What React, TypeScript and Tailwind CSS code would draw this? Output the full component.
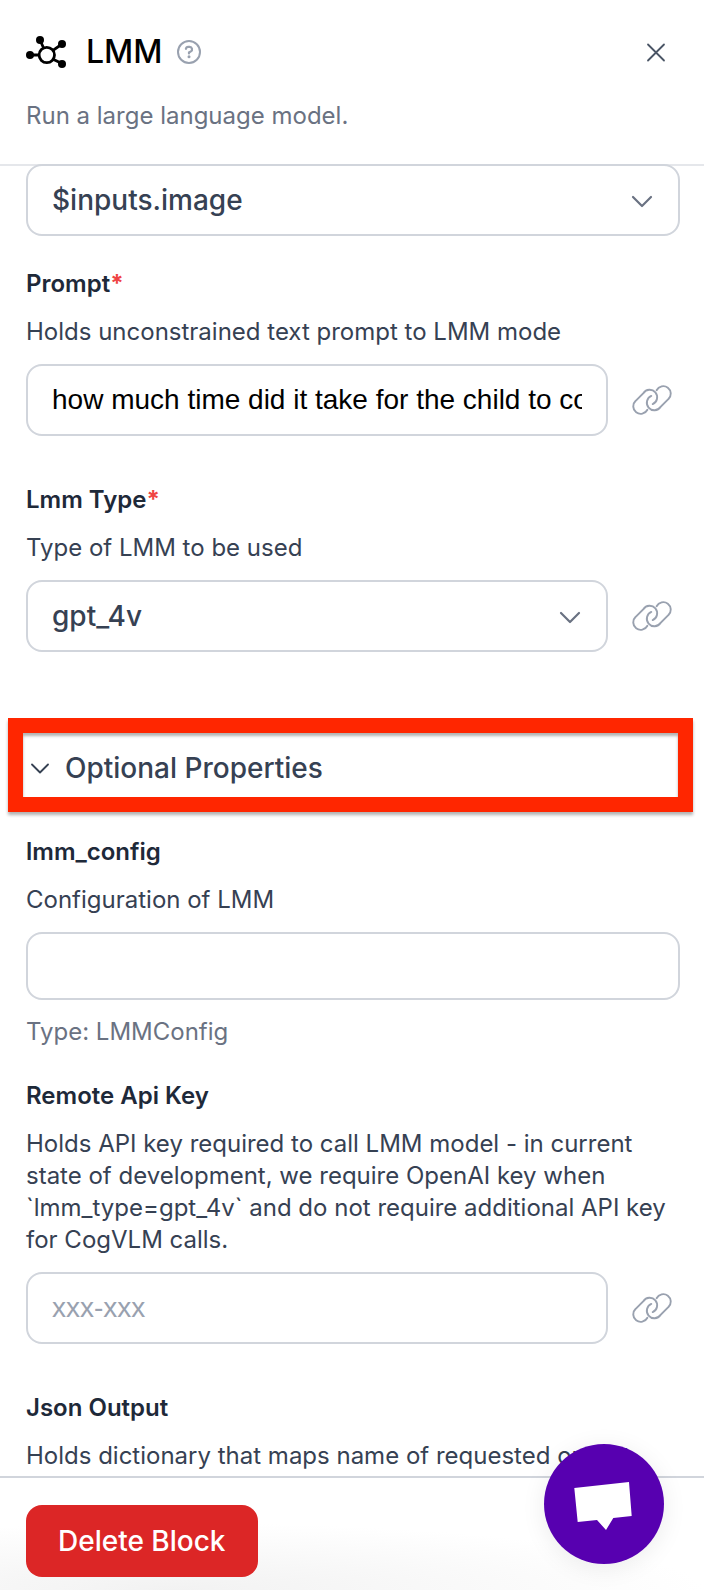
import { ReactNode, useState } from "react";

interface FieldProps {
  id: string;
  label: string;
  description: string;
  required?: boolean;
  children: ReactNode;
}

interface SelectProps {
  id: string;
  label?: string;
  options: string[];
}

const controlClass =
  "w-full min-w-0 rounded-2xl border-2 border-gray-300 bg-white px-6 text-[28px] outline-none focus:border-gray-400";

const inputClass = `${controlClass} font-['Liberation_Sans',sans-serif] text-black placeholder:text-gray-400`;

function ModelIcon() {
  return (
    <svg className="size-10 shrink-0" viewBox="0 0 40 40" aria-hidden="true">
      <g fill="none" stroke="currentColor" strokeWidth="2.8">
        <circle cx="20.8" cy="23" r="7.7" />
        <path d="M14 8l3.6 8M36 12l-9 6.4M36 31.6l-9-4.4M4 23h9" />
      </g>
      <g fill="currentColor">
        <circle cx="14" cy="8" r="4" />
        <circle cx="36" cy="12" r="4" />
        <circle cx="36" cy="32" r="4" />
        <circle cx="4" cy="23" r="4" />
      </g>
    </svg>
  );
}

function HelpIcon() {
  return (
    <svg className="size-6" viewBox="0 0 24 24" fill="none" aria-hidden="true">
      <circle cx="12" cy="12" r="11" stroke="currentColor" strokeWidth="2" />
      <path
        d="M8.9 8.8c.2-1.2 1.1-2 2.3-2h1.5a2.5 2.5 0 0 1 1.2 4.6L12 12.5v.9"
        stroke="currentColor"
        strokeWidth="2.2"
        strokeLinecap="round"
      />
      <circle cx="12" cy="16.8" r="1.5" fill="currentColor" />
    </svg>
  );
}

function CloseIcon() {
  return (
    <svg className="size-5" viewBox="0 0 20 20" aria-hidden="true">
      <path
        d="M2 2.5l16 16M18 2.5l-16 16"
        stroke="currentColor"
        strokeWidth="1.8"
        strokeLinecap="round"
      />
    </svg>
  );
}

function LinkIcon() {
  return (
    <svg
      className="h-8 w-10"
      viewBox="0 0 40 32"
      fill="none"
      stroke="currentColor"
      strokeWidth="1.9"
      strokeLinecap="round"
      aria-hidden="true"
    >
      <path d="M24.6 6.2A7.5 7.5 0 1 1 36.3 15.2L28.6 22.9A7.5 7.5 0 1 1 19.3 11.9" />
      <path d="M15.4 25.8A7.5 7.5 0 1 1 3.7 16.8L11.4 9.1A7.5 7.5 0 1 1 20.7 20.1" />
    </svg>
  );
}

function LinkButton({ label }: { label: string }) {
  return (
    <button
      type="button"
      aria-label={label}
      className="mr-2 shrink-0 text-gray-400 hover:text-gray-600"
    >
      <LinkIcon />
    </button>
  );
}

function Select({ id, label, options }: SelectProps) {
  return (
    <div className="relative min-w-0 flex-1">
      <select
        id={id}
        aria-label={label}
        className={`${controlClass} block h-18 appearance-none font-medium text-gray-700`}
      >
        {options.map((option) => (
          <option key={option}>{option}</option>
        ))}
      </select>
      <svg
        className="pointer-events-none absolute top-1/2 right-[26px] h-4 w-6 -translate-y-1/2 text-gray-500"
        viewBox="0 0 24 16"
        fill="none"
        aria-hidden="true"
      >
        <path
          d="M3 5l9 9 9-9"
          stroke="currentColor"
          strokeWidth="2.2"
          strokeLinecap="round"
          strokeLinejoin="round"
        />
      </svg>
    </div>
  );
}

function Field({ id, label, description, required, children }: FieldProps) {
  return (
    <div className="flex flex-col gap-4">
      <label htmlFor={id} className="font-semibold text-gray-800">
        {label}
        {required && <span className="font-bold text-[#ef4444]">*</span>}
      </label>
      <p>{description}</p>
      {children}
    </div>
  );
}

export default function App() {
  const [open, setOpen] = useState(true);

  return (
    <div className="flex h-screen flex-col bg-white font-['Inter',sans-serif] text-2xl leading-8 text-gray-700">
      <header className="shrink-0 border-b-2 border-gray-200 pt-8 pr-7 pb-8 pl-[26px]">
        <div className="flex h-10 items-center">
          <span className="text-black">
            <ModelIcon />
          </span>
          <h1 className="ml-5 text-[32px] font-medium text-black">LMM</h1>
          <button type="button" aria-label="Help" className="ml-3.5 text-gray-400">
            <HelpIcon />
          </button>
          <button type="button" aria-label="Close" className="mr-2.5 ml-auto text-gray-600">
            <CloseIcon />
          </button>
        </div>
        <p className="mt-7 text-gray-500">Run a large language model.</p>
      </header>

      <main className="relative -mt-0.5 min-h-0 flex-1 overflow-y-auto pr-6 pl-[26px]">
        <div className="flex">
          <Select id="image" label="Image" options={["$inputs.image"]} />
        </div>

        <div className="mt-8 flex flex-col gap-12">
          <Field
            id="prompt"
            label="Prompt"
            description="Holds unconstrained text prompt to LMM mode"
            required
          >
            <div className="flex items-center gap-6">
              <input
                id="prompt"
                type="text"
                defaultValue="how much time did it take for the child to come"
                className={`${inputClass} h-18`}
              />
              <LinkButton label="Link prompt" />
            </div>
          </Field>

          <Field id="lmm-type" label="Lmm Type" description="Type of LMM to be used" required>
            <div className="flex items-center gap-6">
              <Select id="lmm-type" options={["gpt_4v"]} />
              <LinkButton label="Link LMM type" />
            </div>
          </Field>
        </div>

        <div className="mt-[66px] -mr-[13px] mb-6 -ml-[18px] border-[15px] border-[#ff2600] shadow-[0_3px_3px_rgba(0,0,0,0.3),inset_0_3px_3px_rgba(0,0,0,0.3)]">
          <button
            type="button"
            aria-expanded={open}
            onClick={() => setOpen(!open)}
            className="flex h-16 w-full items-center gap-4 pt-1.5 pl-2 text-[28px] font-medium"
          >
            <svg className="w-[18px]" viewBox="0 0 18 12" fill="none" aria-hidden="true">
              <path
                d="M1 2.5l8 8 8-8"
                stroke="currentColor"
                strokeWidth="1.8"
                strokeLinecap="round"
                strokeLinejoin="round"
              />
            </svg>
            Optional Properties
          </button>
        </div>

        {open && (
          <div>
            <Field id="lmm-config" label="lmm_config" description="Configuration of LMM">
              <input id="lmm-config" type="text" className={`${inputClass} h-17`} />
              <p className="text-gray-500">Type: LMMConfig</p>
            </Field>

            <div className="mt-8 flex flex-col gap-12">
              <Field
                id="api-key"
                label="Remote Api Key"
                description="Holds API key required to call LMM model - in current state of development, we require OpenAI key when `lmm_type=gpt_4v` and do not require additional API key for CogVLM calls."
              >
                <div className="flex items-center gap-6">
                  <input
                    id="api-key"
                    type="text"
                    placeholder="xxx-xxx"
                    className={`${inputClass} h-18`}
                  />
                  <LinkButton label="Link API key" />
                </div>
              </Field>

              <div className="flex flex-col gap-4">
                <h2 className="font-semibold text-gray-800">Json Output</h2>
                <p>Holds dictionary that maps name of requested output</p>
              </div>
            </div>
          </div>
        )}
      </main>

      <footer className="shrink-0 border-t-2 border-gray-300 bg-[radial-gradient(75%_60%_at_25%_100%,#f2f2f2,#ffffff)] pt-[27px] pb-[13px] pl-[26px]">
        <button
          type="button"
          className="h-18 rounded-2xl bg-[#dc2626] px-8 text-[28px] font-medium text-white"
        >
          Delete Block
        </button>
      </footer>

      <button
        type="button"
        aria-label="Open chat"
        className="fixed right-10 bottom-[26px] size-30 rounded-full bg-[#5700b0] shadow-[0_4px_24px_rgba(0,0,0,0.08)]"
      >
        <svg viewBox="0 0 120 120" aria-hidden="true">
          <path
            d="M30.3 44L85 38l2.7 34-18.4 2L62 86l-9-10-19.3 2z"
            fill="white"
          />
        </svg>
      </button>
    </div>
  );
}
